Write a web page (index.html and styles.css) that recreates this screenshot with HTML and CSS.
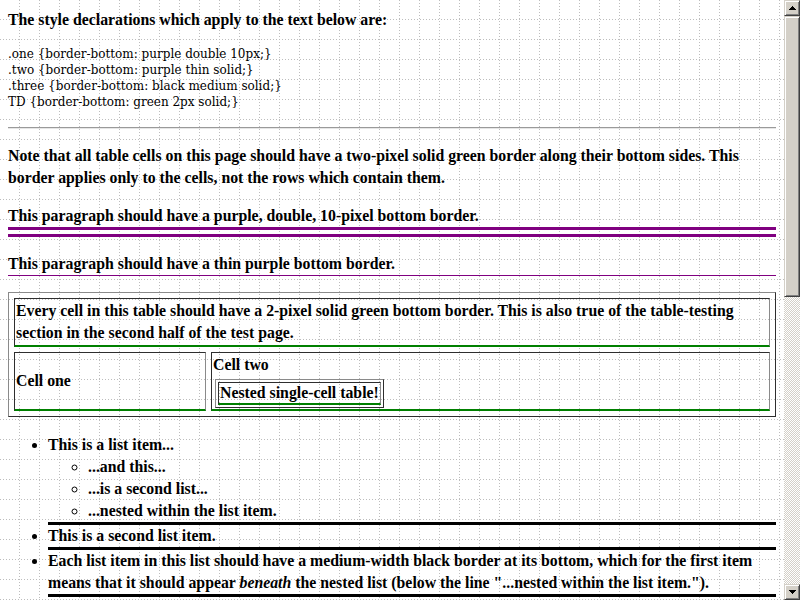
FILE: index.html
```html
<!DOCTYPE html>
<html>
<head>
<meta charset="utf-8">
<title>border-bottom</title>
<link rel="stylesheet" href="styles.css">
</head>
<body>
<div class="window">
  <main class="viewport">
    <p class="intro">The style declarations which apply to the text below are:</p>
    <pre class="code">.one {border-bottom: purple double 10px;}
.two {border-bottom: purple thin solid;}
.three {border-bottom: black medium solid;}
TD {border-bottom: green 2px solid;}</pre>
    <hr class="rule">
    <p class="note">Note that all table cells on this page should have a two-pixel solid green border along their bottom sides. This border applies only to the cells, not the rows which contain them.</p>
    <p class="one">This paragraph should have a purple, double, 10-pixel bottom border.</p>
    <p class="two">This paragraph should have a thin purple bottom border.</p>
    <table class="tabletest">
      <tr><td colspan="2">Every cell in this table should have a 2-pixel solid green bottom border. This is also true of the table-testing section in the second half of the test page.</td></tr>
      <tr>
        <td class="cell-one">Cell one</td>
        <td class="cell-two">Cell two<table class="nested"><tr><td>Nested single-cell table!</td></tr></table></td>
      </tr>
    </table>
    <ul class="list">
      <li class="three">This is a list item...
        <ul class="sublist">
          <li>...and this...</li>
          <li>...is a second list...</li>
          <li>...nested within the list item.</li>
        </ul>
      </li>
      <li class="three">This is a second list item.</li>
      <li class="three">Each list item in this list should have a medium-width black border at its bottom, which for the first item means that it should appear <em>beneath</em> the nested list (below the line "...nested within the list item.").</li>
    </ul>
  </main>
  <div class="scrollbar">
    <div class="sb-btn">
      <svg class="arrow" width="7" height="4" viewBox="0 0 7 4"><rect x="3" y="0" width="1" height="1"/><rect x="2" y="1" width="3" height="1"/><rect x="1" y="2" width="5" height="1"/><rect x="0" y="3" width="7" height="1"/></svg>
    </div>
    <div class="sb-thumb"></div>
    <div class="sb-track"></div>
    <div class="sb-btn">
      <svg class="arrow" width="7" height="4" viewBox="0 0 7 4"><rect x="0" y="0" width="7" height="1"/><rect x="1" y="1" width="5" height="1"/><rect x="2" y="2" width="3" height="1"/><rect x="3" y="3" width="1" height="1"/></svg>
    </div>
  </div>
</div>
</body>
</html>
```

FILE: styles.css
```css
html, body {
  margin: 0;
  padding: 0;
  overflow: hidden;
}

body {
  font-family: "Liberation Serif", "Times New Roman", serif;
  font-weight: bold;
  font-size: 15.8px;
  line-height: 22px;
  color: #000;
}

.window {
  display: flex;
  width: 800px;
  height: 600px;
  overflow: hidden;
}

.viewport {
  flex: 1;
  min-width: 0;
  padding: 8px 8px 0 8px;
  overflow: hidden;
  background-color: #fff;
  background-image:
    conic-gradient(at 1px 1px, transparent 270deg, #bdbdbd 0),
    conic-gradient(at 1px 1px, transparent 270deg, #bdbdbd 0);
  background-size: 20px 3px, 3px 20px;
  background-position: 19px 0, 0 19px;
}

p {
  margin: 0 0 16px 0;
}

.intro {
  margin: 1px 0 15px 0;
}

.code {
  margin: 0 0 17px 0;
  font-family: "DejaVu Serif", serif;
  font-weight: normal;
  font-size: 12px;
  line-height: 16px;
}

.rule {
  margin: 0 0 16px 0;
  height: 0;
  border: 0;
  border-top: 1px solid #9a9a9a;
  border-bottom: 1px solid #e6e6e6;
}

.one {
  border-bottom: 10px double purple;
}

.two {
  border-bottom: 1px solid purple;
}

.three {
  border-bottom: 3px solid black;
}

.tabletest {
  width: 100%;
  border-collapse: separate;
  border-spacing: 5px;
  border: 1px solid;
  border-color: #8a8a8a #2e2e2e #2e2e2e #8a8a8a;
}

.tabletest td {
  padding: 1px;
  border: 1px solid;
  border-color: #2e2e2e #8a8a8a #2e2e2e #2e2e2e;
  border-bottom: 2px solid green;
}

.tabletest .cell-one {
  width: 188px;
}

.tabletest .cell-two {
  vertical-align: top;
}

.nested {
  margin: 3px 0 0 2px;
  border-collapse: separate;
  border-spacing: 2px;
  border: 1px solid;
  border-color: #8a8a8a #2e2e2e #2e2e2e #8a8a8a;
}

.tabletest .nested td {
  padding: 0 1px;
  line-height: 20px;
}

.list {
  margin: 17px 0 0 0;
  padding-left: 40px;
  list-style: disc;
}

.sublist {
  margin: 0;
  padding-left: 40px;
  list-style: circle;
}

em {
  font-style: italic;
}

.scrollbar {
  width: 16px;
  display: flex;
  flex-direction: column;
  background-color: #fff;
  background-image: conic-gradient(#d4d0c8 0 25%, #fff 0 50%, #d4d0c8 0 75%, #fff 0);
  background-size: 2px 2px;
}

.sb-btn,
.sb-thumb {
  box-sizing: border-box;
  background: #d4d0c8;
  border: 1px solid;
  border-color: #d4d0c8 #404040 #404040 #d4d0c8;
  box-shadow: inset 1px 1px #fff, inset -1px -1px #808080;
}

.sb-btn {
  height: 16px;
  flex: none;
  display: flex;
  align-items: center;
  justify-content: center;
}

.sb-thumb {
  height: 281px;
  flex: none;
}

.sb-track {
  flex: 1;
}

.arrow {
  display: block;
  fill: #000;
}
```
